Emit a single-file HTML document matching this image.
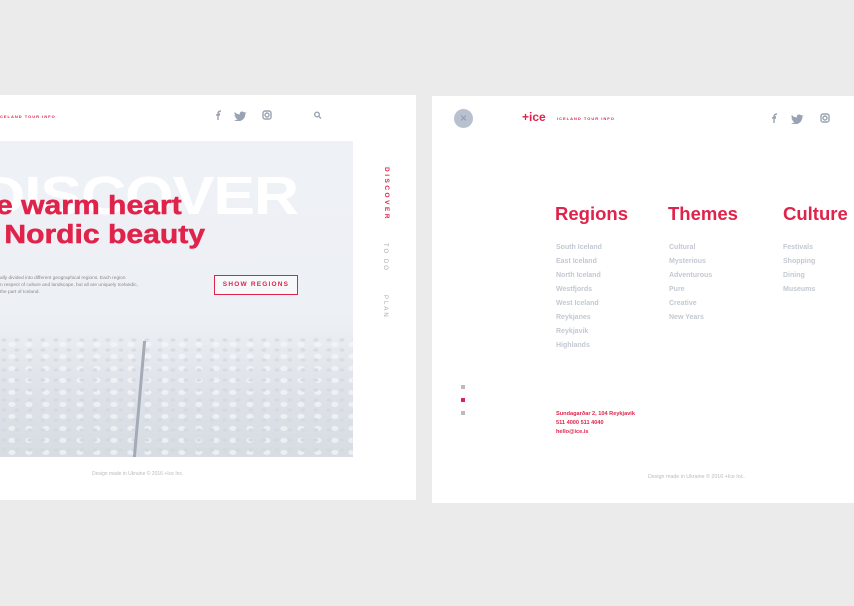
<!DOCTYPE html><html><head><style>
*{margin:0;padding:0;box-sizing:border-box}
body{width:854px;height:606px;background:#ebebeb;position:relative;overflow:hidden;font-family:"Liberation Sans",sans-serif}
.p{position:absolute;background:#fff}
.a{position:absolute;white-space:nowrap}
.red{color:#e0234a}
.g{color:#c3c8d2;font-weight:bold;font-size:7px}
</style></head><body>
<div class="p" style="left:0;top:95px;width:416px;height:405px">
<div class="a red" style="left:0;top:19px;font-size:4px;font-weight:bold;letter-spacing:1px">CELAND TOUR INFO</div>
<svg class="a" style="left:212px;top:14px" width="115" height="12" viewBox="0 0 115 12" fill="none" stroke="#9aa3b3" stroke-width="1.4">
<path d="M6 11V5h2M4 6h4M6 5c0-2 1-3 3-3" /><path d="M34 3.5c-.5.3-1 .4-1.5.5.5-.3.9-.8 1-1.3-.5.3-1 .5-1.6.6-1-1.1-2.9-1-3.8.2-.4.6-.5 1.3-.3 2-2-.1-3.8-1-5-2.5-.7 1.1-.3 2.6.8 3.3-.4 0-.8-.1-1.100-.3 0 1.2.8 2.2 2 2.4-.4.1-.8.1-1.1 0 .3 1 1.3 1.7 2.3 1.7-1 .8-2.4 1.2-3.7 1 1.2.8 2.6 1.2 4 1.2 4.9 0 7.6-4.1 7.4-7.8.5-.4 1-.8 1.3-1.3z" fill="#9aa3b3" stroke="none"/><rect x="51" y="2" width="8" height="8" rx="2"/><circle cx="55" cy="6" r="2"/><circle cx="105" cy="5.5" r="2.3"/><path d="M107 7.5l2 2"/></svg>
<div class="a" style="left:0;top:46px;width:353px;height:316px;background:linear-gradient(#eef1f6 0%,#edf0f5 55%,#e8ecf1 65%,#e2e6ec 80%,#dde1e8 100%);overflow:hidden">
<div class="a" style="left:0;top:195px;width:353px;height:121px;background:radial-gradient(ellipse at 30% 40%,#cdd2da 0 2px,transparent 3px) 0 0/13px 10px,radial-gradient(ellipse at 70% 70%,#fafbfc 0 3px,transparent 4px) 0 0/17px 12px,linear-gradient(transparent,#d3d8df);opacity:.55"></div>
<div class="a" style="left:138px;top:200px;width:3px;height:116px;background:#a4abb6;transform:skewX(-5deg)"></div>
<div class="a" style="left:-20px;top:24px;font-size:54px;font-weight:900;color:#fff;letter-spacing:-1px;transform:scaleX(1.16);transform-origin:left">DISCOVER</div>
</div>
<div class="a red" style="left:-4px;top:97px;font-size:25.5px;font-weight:bold;line-height:29px;transform:scaleX(1.18);transform-origin:left;-webkit-text-stroke:.5px #e0234a">e warm heart<br>&nbsp;Nordic beauty</div>
<div class="a" style="left:0;top:180px;font-size:4.8px;color:#888;line-height:7px">ally divided into different geographical regions. Each region<br>n respect of culture and landscape, but all are uniquely Icelandic,<br>the part of Iceland.</div>
<div class="a red" style="left:214px;top:180px;width:84px;height:20px;border:1.5px solid #e0234a;font-size:6.5px;font-weight:bold;letter-spacing:1.2px;text-align:center;line-height:17px;background:rgba(255,255,255,.5)">SHOW REGIONS</div>
<div class="a red" style="left:383px;top:72px;font-size:6.5px;font-weight:bold;letter-spacing:2.5px;writing-mode:vertical-rl">DISCOVER</div>
<div class="a" style="left:382px;top:148px;font-size:6px;color:#aaa;letter-spacing:2px;writing-mode:vertical-rl">TO DO</div>
<div class="a" style="left:382px;top:200px;font-size:6px;color:#aaa;letter-spacing:2px;writing-mode:vertical-rl">PLAN</div>
<div class="a" style="left:92px;top:376px;font-size:5px;color:#bbb">Design made in Ukraine © 2016 +Ice Inc.</div>
</div>
<div class="p" style="left:432px;top:96px;width:422px;height:407px">
<div class="a" style="left:22px;top:13px;width:19px;height:19px;border-radius:50%;background:#b8c1cf;color:#8d97a8;font-size:12px;text-align:center;line-height:19px">×</div>
<div class="a red" style="left:90px;top:14px;font-size:12px;font-weight:900">+ice</div>
<div class="a red" style="left:125px;top:20px;font-size:4px;font-weight:bold;letter-spacing:1px">ICELAND TOUR INFO</div>
<svg class="a" style="left:336px;top:16px" width="70" height="12" viewBox="0 0 70 12" fill="none" stroke="#9aa3b3" stroke-width="1.4">
<path d="M6 11V5h2M4 6h4M6 5c0-2 1-3 3-3"/><path d="M35 3.5c-.5.3-1 .4-1.5.5.5-.3.9-.8 1-1.3-.5.3-1 .5-1.6.6-1-1.1-2.9-1-3.8.2-.4.6-.5 1.3-.3 2-2-.1-3.8-1-5-2.5-.7 1.1-.3 2.6.8 3.3-.4 0-.8-.1-1.1-.3 0 1.2.8 2.2 2 2.4-.4.1-.8.1-1.1 0 .3 1 1.3 1.7 2.3 1.7-1 .8-2.4 1.2-3.7 1 1.2.8 2.6 1.2 4 1.2 4.9 0 7.6-4.1 7.4-7.8.5-.4 1-.8 1.3-1.3z" fill="#9aa3b3" stroke="none"/><rect x="53" y="2" width="8" height="8" rx="2"/><circle cx="57" cy="6" r="2"/></svg>
<div class="a red" style="left:123px;top:107px;font-size:18.5px;font-weight:bold">Regions</div>
<div class="a red" style="left:236px;top:107px;font-size:18.5px;font-weight:bold">Themes</div>
<div class="a red" style="left:351px;top:107px;font-size:18.5px;font-weight:bold">Culture</div>
<div class="a g" style="left:124px;top:145px;line-height:14px">South Iceland<br>East Iceland<br>North Iceland<br>Westfjords<br>West Iceland<br>Reykjanes<br>Reykjavik<br>Highlands</div>
<div class="a g" style="left:237px;top:145px;line-height:14px">Cultural<br>Mysterious<br>Adventurous<br>Pure<br>Creative<br>New Years</div>
<div class="a g" style="left:351px;top:145px;line-height:14px">Festivals<br>Shopping<br>Dining<br>Museums</div>
<div class="a" style="left:29px;top:289px;width:4px;height:4px;background:#bbb"></div>
<div class="a" style="left:29px;top:302px;width:4px;height:4px;background:#e0234a"></div>
<div class="a" style="left:29px;top:315px;width:4px;height:4px;background:#bbb"></div>
<div class="a red" style="left:124px;top:314px;font-size:5.6px;font-weight:bold;line-height:9px">Sundagarðar 2, 104 Reykjavik<br>511 4000 511 4040<br>hello@ice.is</div>
<div class="a" style="left:216px;top:378px;font-size:5.3px;color:#bbb">Design made in Ukraine © 2016 +Ice Inc.</div>
</div>
</body></html>
